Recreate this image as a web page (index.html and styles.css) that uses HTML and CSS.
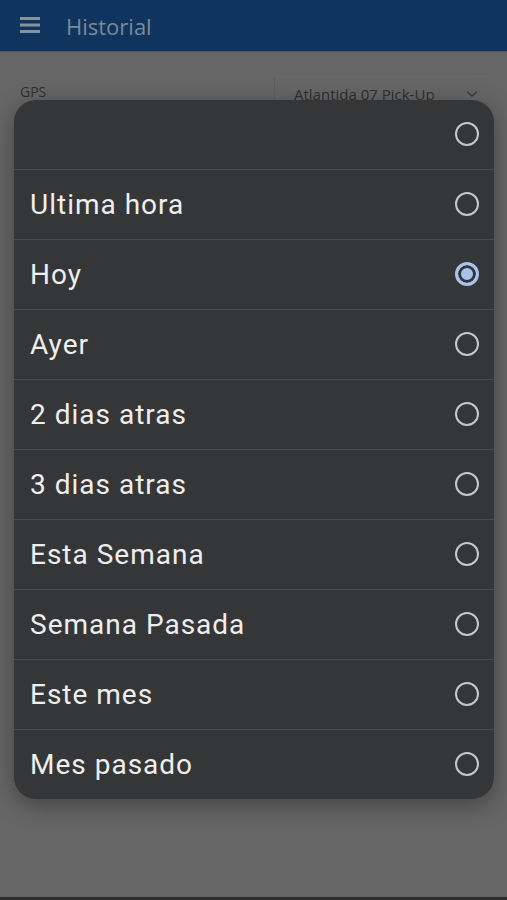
FILE: index.html
```html
<!DOCTYPE html>
<html lang="es">
<head>
  <meta charset="UTF-8" />
  <title>Historial</title>
  <link rel="stylesheet" href="styles.css">
</head>
<body>

  <div class="topbar">
    <span class="menu-btn">
      <svg width="20" height="16" viewBox="0 0 20 16"><rect x="0" y="0" width="20" height="3" fill="#8a929c"/><rect x="0" y="6.5" width="20" height="3" fill="#8a929c"/><rect x="0" y="13" width="20" height="3" fill="#8a929c"/></svg>
    </span>
    <span class="title">Historial</span>
  </div>

  <div class="content">
    <div class="field">
      <span class="field-label">GPS</span>
      <div class="select">
        <span>Atlantida 07 Pick-Up</span>
        <svg width="12" height="8" viewBox="0 0 12 8"><path d="M1 1.5 L6 6 L11 1.5" fill="none" stroke="#3a3a3a" stroke-width="1.4"/></svg>
      </div>
    </div>
  </div>

  <!-- dialog of time ranges -->
  <div class="overlay">
    <div class="dialog">
      <div class="option"><span></span><i class="radio"></i></div>
      <div class="option"><span>Ultima hora</span><i class="radio"></i></div>
      <div class="option"><span>Hoy</span><i class="radio checked"></i></div>
      <div class="option"><span>Ayer</span><i class="radio"></i></div>
      <div class="option"><span>2 dias atras</span><i class="radio"></i></div>
      <div class="option"><span>3 dias atras</span><i class="radio"></i></div>
      <div class="option"><span>Esta Semana</span><i class="radio"></i></div>
      <div class="option"><span>Semana Pasada</span><i class="radio"></i></div>
      <div class="option"><span>Este mes</span><i class="radio"></i></div>
      <div class="option"><span>Mes pasado</span><i class="radio"></i></div>
    </div>
  </div>

</body>
</html>
```

FILE: styles.css
```css
body {
  margin: 0;
  height: 897px;
  background: #666666;
  border-bottom: 3px solid #2e2e2e;
  font-family: "Open Sans", sans-serif;
  overflow: hidden;
}
.topbar {
  height: 52px;
  background: #0f355f;
  display: flex;
  align-items: center;
  border-bottom: 1px solid #4d5866;
  box-sizing: border-box;
}
.menu-btn {
  width: 20px;
  height: 16px;
  margin-left: 20px;
  margin-top: -4px;
}
.title {
  margin-left: 26px;
  margin-top: 1px;
  font-size: 22px;
  color: #7d8998;
}
.content {
  padding: 24px 20px 0 20px;
}
.field {
  display: flex;
  justify-content: space-between;
  align-items: flex-start;
}
.field-label {
  font-size: 14px;
  color: #2f2f2f;
  padding-top: 6px;
}
.select {
  width: 214px;
  height: 30px;
  margin-right: -1px;
  box-sizing: border-box;
  border-left: 1px solid #5e5e5e;
  border-top: 1px solid #6a6a6a;
  display: flex;
  align-items: center;
  justify-content: space-between;
  padding: 4px 10px 0 19px;
  font-size: 15px;
  color: #2f2f2f;
}
.overlay {
  position: absolute;
  top: 0;
  left: 0;
  right: 0;
  padding: 100px 13px 0 14px;
}
.dialog {
  background: #353638;
  border-radius: 22px;
  overflow: hidden;
  box-shadow: 0 6px 24px rgba(0,0,0,0.35);
}
.option {
  height: 70px;
  box-sizing: border-box;
  display: flex;
  align-items: center;
  justify-content: space-between;
  padding: 0 16px 0 16px;
  border-top: 1px solid #4a4b4e;
  font-family: Roboto, sans-serif;
  font-size: 28px;
  letter-spacing: 1px;
  color: #eeeeee;
}
.option:first-child {
  border-top: none;
  height: 69px;
}
.radio {
  width: 24px;
  height: 24px;
  border: 2px solid #c8c8c8;
  border-radius: 50%;
  box-sizing: border-box;
  margin-right: -1px;
  margin-top: -2px;
}
.radio.checked {
  border-color: #a8c4ee;
  background: #a8c4ee;
  box-shadow: inset 0 0 0 3px #353638;
  border-width: 3px;
}
```
